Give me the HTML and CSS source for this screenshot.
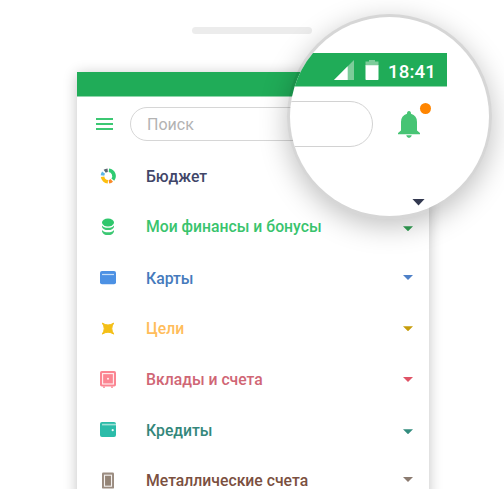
FILE: index.html
```html
<!DOCTYPE html>
<html lang="ru">
<head>
<meta charset="utf-8">
<title>Меню</title>
<link rel="stylesheet" href="styles.css">
</head>
<body>
<div class="speaker"></div>
<main class="phone">
  <div class="statusbar"></div>
  <header class="top">
    <div class="burger"><i></i><i></i><i></i></div>
    <div class="search">Поиск</div>
  </header>
  <nav class="menu">
    <div class="row budget">
      <svg class="icon" viewBox="0 0 18 18"><g fill="none" stroke-width="3.6">
        <path stroke="#2fcb71" d="M9.9 3.3A5.8 5.8 0 0 1 13.8 12.6"/>
        <path stroke="#f98a2b" d="M12.8 13.3A5.8 5.8 0 0 1 9.9 14.7"/>
        <path stroke="#fdbf0f" d="M8.9 14.8A5.8 5.8 0 0 1 3.6 9.7"/>
        <path stroke="#5db5e6" d="M3.5 8.5A5.8 5.8 0 0 1 4.6 5.6"/>
        <path stroke="#5a6472" d="M5.7 4.3A5.8 5.8 0 0 1 8.7 3.2"/></g></svg>
      <span class="label">Бюджет</span>
    </div>
    <div class="row finance">
      <svg class="icon" viewBox="0 0 18 18"><ellipse cx="9" cy="4.5" rx="6" ry="4" fill="#2fc76c"/><g fill="#3cc873"><path d="M3 7.4Q4.6 9.8 9 9.8T15 7.4V8.9Q14 12 9 12T3 8.9Z"/><path d="M3 11.9Q4.6 14.2 9 14.2T15 11.9V13.4Q14 17 9 17T3 13.4Z"/></g></svg>
      <span class="label">Мои финансы и бонусы</span><i class="arrow"></i>
    </div>
    <div class="row cards">
      <svg class="icon" viewBox="0 0 18 18"><rect x="1" y="2" width="16" height="13.3" rx="2" fill="#4c91e4"/><path d="M3 5.5H15" stroke="#c6def7" stroke-width="1.2"/></svg>
      <span class="label">Карты</span><i class="arrow"></i>
    </div>
    <div class="row goals">
      <svg class="icon" viewBox="0 0 18 18"><path d="M3.3 3.1Q9 6.9 14.7 3.1Q10.9 8.6 14.7 14.1Q9 10.3 3.3 14.1Q7.1 8.6 3.3 3.1Z" fill="#f4bf16" stroke="#f4bf16" stroke-width="1" stroke-linejoin="round"/></svg>
      <span class="label">Цели</span><i class="arrow"></i>
    </div>
    <div class="row deposits">
      <svg class="icon" viewBox="0 0 18 18"><rect x="1" y="1" width="16" height="15.6" rx="1.8" fill="#fb8592"/><rect x="3.6" y="3.6" width="10.8" height="10.4" fill="none" stroke="#fff0f1" stroke-width="1.1"/><circle cx="9" cy="8.8" r="1" fill="#fff0f1"/><path d="M4 17.2H6M12 17.2H14" stroke="#fb8592" stroke-width="1.2"/></svg>
      <span class="label">Вклады и счета</span><i class="arrow"></i>
    </div>
    <div class="row credits">
      <svg class="icon" viewBox="0 0 18 18"><rect x="1" y="1" width="16" height="15" rx="2" fill="#2bbca9"/><path d="M3 3.6H17" stroke="#9fe0d6" stroke-width="1.6"/><circle cx="13.7" cy="9.2" r="1.1" fill="#e9faf7"/></svg>
      <span class="label">Кредиты</span><i class="arrow"></i>
    </div>
    <div class="row metals">
      <svg class="icon" viewBox="0 0 18 18"><rect x="3" y="0.6" width="12" height="16" rx="1.2" fill="#9b8c80"/><rect x="5.5" y="3.2" width="7" height="11" fill="#948476" stroke="#f4f1ef" stroke-width="1.1"/></svg>
      <span class="label">Металлические счета</span><i class="arrow"></i>
    </div>
  </nav>
</main>
<div class="lens-rim"></div>
<section class="lens">
  <div class="lens-status">
    <svg class="signal" viewBox="0 0 20 20"><path fill="#7dcc9a" d="M20 0V20H0Z"/><path fill="#fff" d="M13.7 6.3V20H0Z"/></svg>
    <svg class="battery" viewBox="0 0 14 20"><path fill="#7dcc9a" d="M4 0H10V1.5H13.5V6H.5V1.5H4Z"/><path fill="#fff" d="M.5 5.2H13.5V19.2Q13.5 20 12.7 20H1.3Q.5 20 .5 19.2Z"/></svg>
    <span class="clock">18:41</span>
  </div>
  <div class="lens-tools">
    <div class="lens-search"></div>
    <div class="bell">
      <svg viewBox="0 0 22 28"><path fill="#47c474" d="M11 0Q13 0 13 2.8Q19 4.5 19 11V19.5L22 22V23.2H0V22L3 19.5V11Q3 4.5 9 2.8Q9 0 11 0ZM8.2 24.2H13.8Q13.2 27 11 27T8.2 24.2Z"/></svg>
      <i class="badge"></i>
    </div>
  </div>
  <i class="lens-arrow"></i>
</section>
</body>
</html>
```
FILE: styles.css
```css
* { box-sizing: border-box; }
body { margin: 0; width: 504px; height: 489px; overflow: hidden; position: relative; background: #fff; font-family: Roboto, "Liberation Sans", sans-serif; }
.speaker { width: 120px; height: 7px; margin: 27px 0 38px 192px; border-radius: 4px; background: #ececec; }
.phone { width: 352px; height: 440px; margin-left: 77px; background: #fff; box-shadow: 0 2px 13px rgba(0,0,0,.24); }
.statusbar { height: 25px; background: #20ac58; border-bottom: 1px solid #90d6ac; }
.top { height: 54px; display: flex; align-items: center; padding-left: 19px; }
.burger { width: 17px; display: grid; gap: 3px; }
.burger i { height: 2px; background: #3cc873; }
.search { width: 290px; height: 34px; margin-left: 17px; padding-left: 16px; border: 1px solid #d6d6d6; border-radius: 17px; font-size: 16px; line-height: 34px; color: #b3b3b3; }
.menu { display: grid; grid-auto-rows: 50.75px; }
.row { display: flex; align-items: center; padding: 0 16px 0 22px; }
.icon { width: 18px; height: 18px; flex: none; }
.label { margin-left: 29px; flex: 1; font-size: 15.75px; line-height: 20px; font-weight: 500; white-space: nowrap; }
.budget .label, .cards .label, .deposits .label, .credits .label { padding-top: 2px; }
.arrow { width: 10px; height: 5px; clip-path: polygon(0 0, 100% 0, 50% 100%); }
.budget { color: #414668; }
.finance { color: #39c46d; }
.finance .arrow { background: #319f53; margin-top: 3px; }
.cards { color: #457abc; }
.cards .arrow { background: #4e80c7; margin-top: -1px; }
.goals { color: #ffbd5b; }
.goals .arrow { background: #c69c0a; }
.deposits { color: #d06675; }
.deposits .arrow { background: #df5366; }
.credits { color: #34877b; }
.credits .arrow { background: #338c7e; margin-top: 3px; }
.metals { color: #7b503f; }
.metals .arrow { background: #8b7b70; margin-top: -3px; }
.lens-rim, .lens { position: absolute; border-radius: 50%; }
.lens-rim { left: 287px; top: 13.5px; width: 205px; height: 205px; background: rgba(0,0,0,.16); box-shadow: 0 7px 28px rgba(0,0,0,.25); }
.lens { left: 290px; top: 16.5px; width: 199px; height: 199px; background: #fff; overflow: hidden; padding-top: 36.5px; }
.lens-status { width: 157px; height: 34px; background: #20ac58; border-bottom: 1px solid #90d6ac; display: flex; align-items: center; padding: 1px 0 0 44px; }
.signal { width: 20px; height: 20px; }
.battery { width: 14px; height: 20px; margin-left: 11px; }
.clock { margin-left: 9px; font-size: 18.7px; line-height: 24px; font-weight: 500; color: #fff; letter-spacing: .1px; padding-top: 3px; }
.lens-tools { display: flex; margin-top: 14px; }
.lens-search { width: 102.5px; height: 46px; margin-left: -20px; border: 1px solid #d2d2d2; border-radius: 23px; }
.bell { position: relative; width: 22px; height: 28px; margin: 10px 0 0 25.5px; }
.bell svg { display: block; width: 22px; height: 28px; }
.badge { position: absolute; width: 11px; height: 11px; left: 22px; top: -8.5px; border-radius: 50%; background: #ff8500; }
.lens-arrow { display: block; width: 13px; height: 7px; margin: 51.5px 0 0 122px; background: #333950; clip-path: polygon(0 0, 100% 0, 50% 100%); }
```
